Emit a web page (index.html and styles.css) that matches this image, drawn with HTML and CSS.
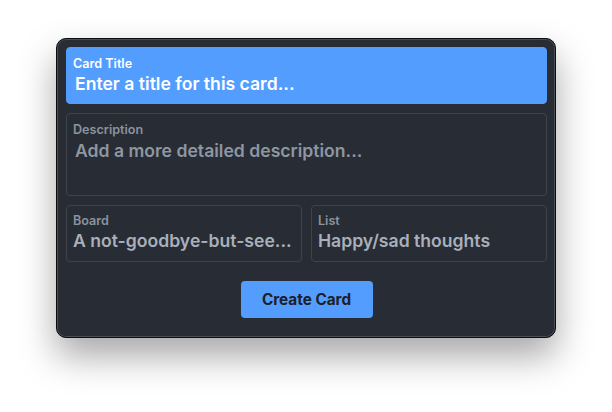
FILE: index.html
```html
<!DOCTYPE html>
<html lang="en">
<head>
  <meta charset="UTF-8"/>
  <title>Create Card</title>
  <link rel="stylesheet" href="styles.css">
</head>
<body>
  <div class="window">
    <div class="field title-field">
      <label for="title">Card Title</label>
      <input type="text" id="title" placeholder="Enter a title for this card..."/>
    </div>
    <div class="field desc-field">
      <label for="desc">Description</label>
      <textarea id="desc" placeholder="Add a more detailed description..."></textarea>
    </div>
    <div class="row">
      <div class="field">
        <label>Board</label>
        <div class="value">A not-goodbye-but-see...</div>
      </div>
      <div class="field">
        <label>List</label>
        <div class="value">Happy/sad thoughts</div>
      </div>
    </div>
    <div class="actions">
      <button>Create Card</button>
    </div>
  </div>
</body>
</html>
```

FILE: styles.css
```css
html, body { height: 100%; }
body { margin: 0; background: #fff; font-family: Inter, "Liberation Sans", sans-serif; display: flex; justify-content: center; align-items: flex-start; padding-top: 38px; box-sizing: border-box; }
.window { width: 500px; height: 300px; box-sizing: border-box; background: #282c34; border: 1px solid #0c0d10; border-radius: 10px; box-shadow: inset 0 0 0 1px #4a4e55, 0 18px 36px rgba(0,0,0,0.35); padding: 8px 8px 20px 9px; display: flex; flex-direction: column; gap: 9px; }
.field { border: 1px solid #3e434c; border-radius: 4px; padding: 8px 6px 8px 6px; display: flex; flex-direction: column; min-width: 0; }
.field label { font-size: 12.6px; font-weight: 600; color: #8b939f; line-height: 16px; }
.field input, .field textarea, .field .value { background: none; border: none; outline: none; padding: 0; margin: 0; font-family: inherit; font-size: 17.6px; font-weight: 600; line-height: 24px; color: #a8b0bb; }
.field .value { white-space: nowrap; }
.field input::placeholder, .field textarea::placeholder { color: #8e96a2; }
.title-field { background: #539dfe; border-color: #539dfe; height: 57px; box-sizing: border-box; }
.title-field label { color: #fff; }
.title-field input { color: #fff; padding-left: 2px; }
.title-field input::placeholder { color: #fff; }
.desc-field { height: 83px; box-sizing: border-box; }
.desc-field textarea { resize: none; height: 48px; padding-left: 2px; padding-top: 1px; }
.row { display: flex; gap: 9px; }
.row .field { flex: 1; height: 57px; box-sizing: border-box; padding-top: 7px; }
.actions { display: flex; justify-content: center; margin-top: 10px; }
.actions button { width: 132px; height: 37px; background: #539dfe; color: #1c2027; border: none; border-radius: 4px; font-family: inherit; font-size: 15.3px; font-weight: 700; cursor: pointer; }
```
